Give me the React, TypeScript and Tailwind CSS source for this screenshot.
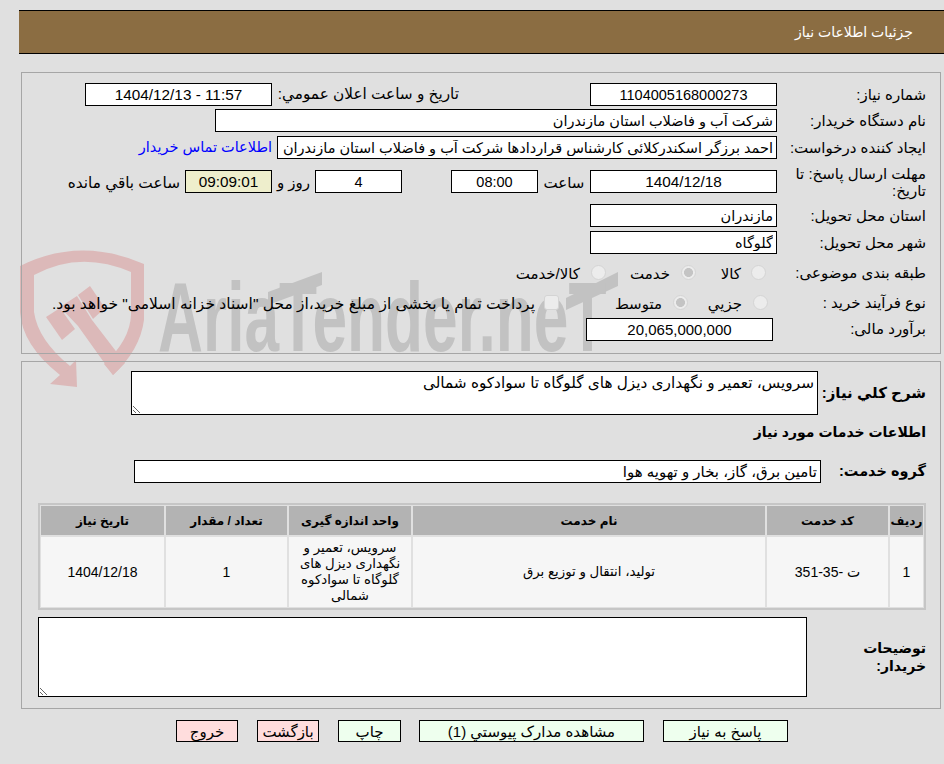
import React from "react";

const stack = "font-['Liberation_Sans','DejaVu_Sans',sans-serif]";
const box = `h-[23px] border border-black px-[3px] outline-none ${stack} text-black`;
const labelCls = "w-[149px] shrink-0 leading-[17px]";
const radioCls =
  "m-0 h-[15px] w-[15px] shrink-0 appearance-none rounded-full border border-[#d4d4d4] bg-[#ececec] checked:bg-[radial-gradient(circle,#c4c4c4_45%,#ececec_52%)]";

const Field = ({ value, className = "bg-white", center = false, size = "text-[14.5px]" }: { value: string; className?: string; center?: boolean; size?: string }) => (
  <input readOnly value={value} dir="rtl" className={`${box} ${center ? "text-center" : "text-right"} ${size} ${className}`} />
);

const Radio = ({ checked = false, className = "" }: { checked?: boolean; className?: string }) => (
  <input type="radio" disabled checked={checked} readOnly className={`${radioCls} ${className}`} />
);

const Row = ({ className = "", children }: { className?: string; children: React.ReactNode }) => (
  <div className={`flex items-center ${className}`}>{children}</div>
);

const Watermark = () => (
  <div className="pointer-events-none absolute left-0 top-0 h-[400px] w-[640px]">
    <svg className="absolute left-0 top-[240px]" width="640" height="160" viewBox="0 240 640 160">
      <g fill="#dcb9b9" stroke="none">
        <path d="M20 266 Q80 236 144 264 L144 320 Q140 350 113 375 L104 364 Q130 340 131 315 L131 272 Q80 250 34 275 L34 312 Q38 340 70 366 L76 360 L77 387 L50 384 L60 375 Q22 345 20 312 Z" />
        <path d="M46 317 L60 308 L75 329 L62 340 Z" />
        <path d="M78 295 L90 286 L105 308 L93 319 Z" />
        <path d="M60 307 L77 296 L92 320 L125 363 L113 375 L78 326 Z" />
      </g>
      <g fill="#c2c2c2">
        <path d="M268 292 L322 272 L322 285 L268 305 Z" />
        <path d="M566 298 L618 272 L618 286 L566 310 Z" />
      </g>
    </svg>
    <div
      dir="ltr"
      className="absolute left-[158px] top-[262px] origin-top-left scale-x-[0.635] whitespace-nowrap font-['Liberation_Sans',sans-serif] text-[98px] leading-[110px] font-bold text-[#c2c2c2]"
    >
      AriaTender.neT
    </div>
  </div>
);

const Th = ({ children }: { children: React.ReactNode }) => (
  <div className="flex h-[29px] items-center justify-center bg-[#b3b3b3] text-[12px] font-bold">{children}</div>
);
const Td = ({ className = "text-[13.3px]", children }: { className?: string; children: React.ReactNode }) => (
  <div className={`flex h-[70px] items-center justify-center bg-[#f6f6f6] px-[6px] text-center leading-[16px] ${className}`}>{children}</div>
);

export default function App() {
  return (
    <div dir="rtl" className={`relative h-[764px] w-[944px] overflow-hidden bg-[#e0e0e0] text-[15px] text-black ${stack}`}>
      <Watermark />
      <div className="relative">
        {/* header */}
        <div className="ml-[19px] mt-[10px] flex h-[44px] items-center border-y border-black bg-[#8b6d42] pr-[31px] text-[14px] text-white">
          جزئیات اطلاعات نیاز
        </div>

        {/* main info */}
        <div className="ml-[21px] mr-[3px] mt-[18px] flex h-[282px] flex-col border border-[#a6a6a6] pr-[14px] pt-[10px]">
          <Row className="h-[23px]">
            <div className={labelCls}>شماره نیاز:</div>
            <Field value="1104005168000273" center className="w-[187px] bg-white" />
            <div className="mr-[131px] w-[181px] shrink-0 whitespace-nowrap text-[15.3px]">تاریخ و ساعت اعلان عمومي:</div>
            <Field value="11:57 - 1404/12/13" center size="text-[15.3px]" className="mr-[6px] w-[187px] bg-white" />
          </Row>
          <Row className="mt-[3px] h-[23px]">
            <div className={labelCls}>نام دستگاه خریدار:</div>
            <Field value="شرکت آب و فاضلاب استان مازندران" className="w-[562px] bg-white" />
          </Row>
          <Row className="mt-[4px] h-[23px]">
            <div className={labelCls}>ایجاد کننده درخواست:</div>
            <Field value="احمد برزگر اسکندرکلائی کارشناس قراردادها شرکت آب و فاضلاب استان مازندران" className="w-[500px] bg-white" />
            <a className="mr-[5px] whitespace-nowrap text-[14.5px] text-[#0000ff]">اطلاعات تماس خریدار</a>
          </Row>
          <Row className="mt-[6px] h-[39px] items-start">
            <div className={labelCls}>مهلت ارسال پاسخ: تا تاریخ:</div>
            <Field value="1404/12/18" center size="text-[15.3px]" className="mt-[5px] w-[187px] bg-white" />
            <div className="mt-[7px] w-[52px] shrink-0 text-center">ساعت</div>
            <Field value="08:00" center className="mt-[5px] w-[87px] bg-white" />
            <Field value="4" center className="mr-[49px] mt-[5px] w-[87px] bg-white" />
            <div className="mt-[7px] w-[43px] shrink-0 text-center">روز و</div>
            <Field value="09:09:01" center size="text-[15.3px]" className="mt-[5px] w-[87px] bg-[#eeeecc]" />
            <div className="mr-[5px] mt-[7px] whitespace-nowrap text-[15.3px]">ساعت باقي مانده</div>
          </Row>
          <Row className="h-[23px]">
            <div className={labelCls}>استان محل تحویل:</div>
            <Field value="مازندران" className="w-[187px] bg-white" />
          </Row>
          <Row className="mt-[4px] h-[23px]">
            <div className={labelCls}>شهر محل تحویل:</div>
            <Field value="گلوگاه" className="w-[187px] bg-white" />
          </Row>
          <Row className="mt-[7px] h-[22px]">
            <div className={labelCls}>طبقه بندی موضوعی:</div>
            <Radio className="mr-[11px]" />
            <div className="mr-[10px] mt-[4px] w-[45px] shrink-0">کالا</div>
            <Radio checked />
            <div className="mr-[11px] mt-[4px] w-[64px] shrink-0">خدمت</div>
            <Radio />
            <div className="mr-[11px] mt-[4px] whitespace-nowrap">کالا/خدمت</div>
          </Row>
          <Row className="mt-[8px] h-[22px]">
            <div className={labelCls}>نوع فرآیند خرید :</div>
            <Radio className="mr-[9px]" />
            <div className="mr-[11px] mt-[4px] w-[54px] shrink-0">جزيي</div>
            <Radio checked />
            <div className="mr-[11px] mt-[4px] w-[103px] shrink-0">متوسط</div>
            <input type="checkbox" disabled className="m-0 h-[15px] w-[15px] shrink-0 appearance-none rounded-[3px] border border-[#d4d4d4] bg-[#ececec]" />
            <div className="mr-[9px] mt-[4px] whitespace-nowrap text-[15.5px]">پرداخت تمام یا بخشی از مبلغ خرید،از محل "اسناد خزانه اسلامی" خواهد بود.</div>
          </Row>
          <Row className="mt-[5px] h-[23px]">
            <div className="w-[153px] shrink-0">برآورد مالی:</div>
            <Field value="20,065,000,000" center size="text-[15px]" className="w-[187px] bg-white" />
          </Row>
        </div>

        {/* second panel */}
        <div className="ml-[21px] mr-[3px] mt-[7px] h-[348px] border border-[#a6a6a6] pr-[14px] pt-[9px]">
          <Row className="h-[44px]">
            <div className="w-[108px] shrink-0 text-[15px] font-bold">شرح کلي نیاز:</div>
            <textarea
              readOnly
              dir="rtl"
              value="سرویس، تعمیر و نگهداری دیزل های گلوگاه تا سوادکوه شمالی"
              className="h-[44px] w-[687px] border border-black bg-white px-[3px] text-[15.3px] outline-none"
            />
          </Row>
          <div className="mt-[8px] text-[14px] leading-[18px] font-bold">اطلاعات خدمات مورد نیاز</div>
          <Row className="mt-[19px] h-[23px]">
            <div className="w-[105px] shrink-0 text-[14.5px] font-bold">گروه خدمت:</div>
            <Field value="تامین برق، گاز، بخار و تهویه هوا" size="text-[15px]" className="w-[687px] bg-white" />
          </Row>
          <div className="ml-[-3px] mr-0 mt-[20px] grid w-[888px] grid-cols-[33px_121px_352px_122px_121px_123px] gap-[2px] border-2 border-[#c6c6c6] p-[1px]">
            <Th>ردیف</Th>
            <Th>کد خدمت</Th>
            <Th>نام خدمت</Th>
            <Th>واحد اندازه گیری</Th>
            <Th>تعداد / مقدار</Th>
            <Th>تاریخ نیاز</Th>
            <Td className="text-[14px]">1</Td>
            <Td className="text-[14px]">ت -35-351</Td>
            <Td>تولید، انتقال و توزیع برق</Td>
            <Td>سرویس، تعمیر و نگهداری دیزل های گلوگاه تا سوادکوه شمالی</Td>
            <Td className="text-[14px]">1</Td>
            <Td className="text-[14px]">1404/12/18</Td>
          </div>
          <Row className="mt-[7px] h-[80px]">
            <div className="w-[119px] shrink-0 pl-[40px] text-[14px] leading-[18px] font-bold">توضیحات خریدار:</div>
            <textarea readOnly dir="rtl" className="h-[80px] w-[769px] border border-black bg-white px-[3px] outline-none" />
          </Row>
        </div>

        {/* buttons */}
        <div className="mr-[156px] mt-[11px] flex gap-[19px] text-[15px]">
          <button className="h-[22px] w-[125px] border border-black bg-[#eeffee]">پاسخ به نیاز</button>
          <button className="h-[22px] w-[225px] border border-black bg-[#eeffee]">مشاهده مدارک پیوستي (1)</button>
          <button className="-mr-px h-[22px] w-[63px] border border-black bg-[#eeffee]">چاپ</button>
          <button className="h-[22px] w-[62px] border border-black bg-[#ffdddd]">بازگشت</button>
          <button className="h-[22px] w-[62px] border border-black bg-[#ffdddd]">خروج</button>
        </div>
      </div>
    </div>
  );
}
